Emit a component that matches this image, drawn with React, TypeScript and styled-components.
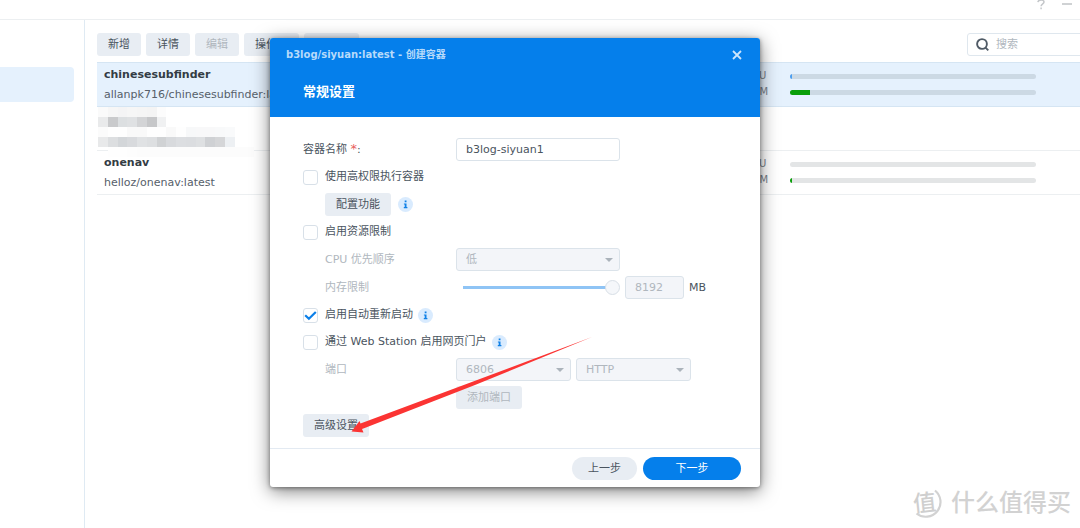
import React from "react";
import styled, { createGlobalStyle, css } from "styled-components";

const GlobalStyle = createGlobalStyle`
  *, *::before, *::after { box-sizing: border-box; }
  html, body, #root { height: 100%; }
  body {
    margin: 0;
    overflow: hidden;
    background: #fff;
    color: #4a545e;
    font: 11px/16px "DejaVu Sans", "Noto Sans CJK SC", sans-serif;
  }
  button, input, select { font: inherit; color: inherit; margin: 0; }
`;

const Desktop = styled.div`
  position: relative;
  display: flex;
  flex-direction: column;
  min-height: 100%;
  overflow: hidden;
`;

const TopBar = styled.header`
  display: flex;
  justify-content: flex-end;
  align-items: flex-start;
  gap: 16px;
  height: 20px;
  padding-right: 8px;
  border-bottom: 1px solid #eceff1;
`;

const WindowButton = styled.button`
  display: flex;
  width: 10px;
  height: 10px;
  padding: 0;
  border: 0;
  background: none;
  color: #c4c7ca;
`;

const Columns = styled.div`
  display: flex;
  flex: 1;
`;

const Sidebar = styled.nav`
  width: 85px;
  padding: 47px 10px 0 0;
  border-right: 1px solid #dfeaf3;
`;

const SidebarItem = styled.a`
  display: block;
  height: 35px;
  border-radius: 0 4px 4px 0;
  background: #e5f1fd;
`;

const Main = styled.main`
  flex: 1;
  min-width: 0;
  padding: 13px 0 0 12px;
`;

const Toolbar = styled.div`
  display: flex;
  gap: 5px;
  margin-bottom: 6px;
`;

const Button = styled.button<{ $wide?: boolean }>`
  height: 23px;
  padding: 0 11px;
  border: 0;
  border-radius: 3px;
  background: #e8edf3;
  line-height: 23px;
  white-space: nowrap;
  ${(p) => p.$wide && css`width: 55px; text-align: left;`}
  &:disabled { color: #b0b7be; }
`;

const Search = styled.label`
  display: flex;
  align-items: center;
  gap: 7px;
  width: 130px;
  height: 23px;
  margin: 0 -17px 0 auto;
  padding-left: 8px;
  border: 1px solid #dfe7ee;
  border-radius: 3px;
`;

const SearchInput = styled.input`
  width: 80px;
  padding: 0;
  border: 0;
  outline: 0;
  background: none;
  &::placeholder { color: #b0b7be; opacity: 1; }
`;

const List = styled.ul`
  margin: 0;
  padding: 0;
  list-style: none;
`;

const Item = styled.li<{ $selected?: boolean }>`
  display: flex;
  justify-content: space-between;
  height: 44px;
  padding: 0 44px 0 7px;
  border-bottom: 1px solid #eceff1;
  ${(p) => p.$selected && css`
    height: 45px;
    border-top: 1px solid #d5e5f3;
    border-bottom-color: #d5e5f3;
    background: #e5f1fd;
  `}
`;

const Names = styled.div`
  display: flex;
  flex-direction: column;
  gap: 4px;
  padding-top: 4px;
`;

const Name = styled.strong`
  color: #333c44;
`;

const Image = styled.span`
  color: #56606a;
`;

const Meters = styled.div`
  display: grid;
  grid-template-columns: 44px 246px;
  grid-auto-rows: 16px;
  align-items: center;
  padding-top: 5px;
  color: #7a838c;
  font-size: 10px;
`;

const Track = styled.div`
  height: 5px;
  overflow: hidden;
  border-radius: 3px;
  background: rgba(60, 70, 80, 0.14);
`;

const Fill = styled.div<{ $color: string }>`
  height: 100%;
  background: ${(p) => p.$color};
`;

const Mosaic = styled.div`
  display: grid;
  grid-template-columns: repeat(16, 1fr);
  grid-auto-rows: 10px;
  width: 156px;
  margin-left: -6px;
`;

const Tile = styled.span<{ $color: string }>`
  background: ${(p) => p.$color};
`;

const Dialog = styled.section`
  position: absolute;
  top: 38px;
  left: 270px;
  width: 490px;
  border-radius: 3px;
  background: #fff;
  box-shadow: 0 4px 18px rgba(0, 0, 0, 0.5), 0 1px 4px rgba(0, 0, 0, 0.4);
`;

const DialogHeader = styled.header`
  height: 79px;
  padding: 9px 16px 0;
  border-radius: 3px 3px 0 0;
  background: #057feb;
  color: #fff;
`;

const TitleRow = styled.div`
  display: flex;
  justify-content: space-between;
  align-items: center;
  font-size: 10px;
  font-weight: 700;
  color: #b7dafa;
`;

const Close = styled.button`
  display: flex;
  width: 14px;
  height: 14px;
  padding: 2px;
  border: 0;
  background: none;
  color: #cde5fc;
`;

const Heading = styled.h2`
  margin: 19px 0 0 17px;
  font-size: 13px;
  line-height: 20px;
`;

const Form = styled.form`
  display: flex;
  flex-direction: column;
  gap: 5px;
  padding: 21px 33px 11px;
`;

const Row = styled.div<{ $check?: boolean }>`
  display: flex;
  align-items: center;
  gap: 5px;
  height: ${(p) => (p.$check ? 22 : 23)}px;
`;

const FieldLabel = styled.label<{ $indent?: boolean; $muted?: boolean }>`
  width: 148px;
  padding-left: ${(p) => (p.$indent ? 22 : 0)}px;
  color: ${(p) => (p.$muted ? "#b0b7be" : "inherit")};
`;

const Required = styled.span`
  color: #e8605c;
  font-size: 13px;
`;

const Indent = styled.div<{ $size: number }>`
  display: flex;
  align-items: center;
  gap: 7px;
  padding-left: ${(p) => p.$size}px;
`;

const CheckLabel = styled.label`
  display: flex;
  align-items: center;
  gap: 7px;
`;

const CheckBox = styled.span`
  display: grid;
  width: 15px;
  height: 15px;
  & > * { grid-area: 1 / 1; }
`;

const CheckInput = styled.input`
  appearance: none;
  border: 1px solid #d8e0e8;
  border-radius: 3px;
  background: #fff;
  & + svg { visibility: hidden; }
  &:checked + svg { visibility: visible; }
`;

const field = css`
  height: 23px;
  padding: 0 9px;
  border: 1px solid #dbe3ea;
  border-radius: 3px;
  background: #fff;
  opacity: 1;
  &:disabled {
    background: #f3f5f9;
    color: #b0b7be;
  }
`;

const TextInput = styled.input<{ $width: number }>`
  ${field}
  width: ${(p) => p.$width}px;
`;

const SelectBox = styled.span<{ $width: number }>`
  display: grid;
  align-items: center;
  width: ${(p) => p.$width}px;
  & > * { grid-area: 1 / 1; }
  & > svg { justify-self: end; margin-right: 7px; pointer-events: none; }
`;

const SelectInput = styled.select`
  ${field}
  width: 100%;
  appearance: none;
`;

const Range = styled.input`
  appearance: none;
  width: 157px;
  height: 15px;
  margin-left: 7px;
  background: linear-gradient(#8fc4f5, #8fc4f5) 0 6px / 145px 3px no-repeat;
  &::-webkit-slider-thumb {
    appearance: none;
    width: 15px;
    height: 15px;
    border: 1px solid #d8dfe6;
    border-radius: 50%;
    background: #f5f7fa;
  }
`;

const InfoButton = styled.button`
  display: flex;
  width: 15px;
  height: 15px;
  padding: 0;
  border: 0;
  border-radius: 50%;
  background: #d9ebfe;
`;

const DialogFooter = styled.footer`
  display: flex;
  justify-content: flex-end;
  gap: 6px;
  height: 39px;
  padding: 8px 19px 0 0;
  border-top: 1px solid #e3eaf2;
`;

const Pill = styled.button<{ $primary?: boolean }>`
  width: ${(p) => (p.$primary ? 98 : 65)}px;
  height: 23px;
  padding: 0;
  border: 0;
  border-radius: 12px;
  background: ${(p) => (p.$primary ? "#057feb" : "#e8edf3")};
  color: ${(p) => (p.$primary ? "#fff" : "inherit")};
`;

const Pointer = styled.svg`
  position: absolute;
  top: 330px;
  left: 345px;
  pointer-events: none;
`;

const Watermark = styled.div`
  position: absolute;
  right: 9px;
  bottom: 8px;
  display: flex;
  align-items: center;
  gap: 8px;
  color: #d2d2d2;
  font-size: 24px;
  line-height: 34px;
`;

const Brand = styled.span`
  font-weight: 500;
`;

type Usage = { label: string; value: number; color: string };

const mosaicTiles = [
  "#fafafa #f6f6f6 #f4f4f5 #f6f6f6 #f5f5f5 #f4f4f4 #fcfcfc #fff #fff #fff #fff #fff #fff #fff #fff #fff",
  "#e9eaeb #c9cacc #dcdfe1 #dfe1e3 #d3d4d6 #c6c7c9 #f0f1f2 #fff #fff #fff #fff #fff #fff #fff #fff #fff",
  "#fbfbfb #fefefe #fefefe #f9f9f9 #f9f9f9 #fefefe #fefefe #f9f9f9 #fefefe #f7f8f9 #f8f8f9 #f8f8f9 #f8f9fa #f9fafb #fff #fff",
  "#e8e9ea #dcdee0 #d3d6d9 #d8dadd #e0e2e4 #dddfe1 #d0d2d4 #d8dadd #dcdee1 #dbdde0 #dee0e2 #cfd1d4 #d5d6d8 #edf0f3 #fff #fff",
  "transparent #fefefe #fefefe #fdfdfd #fcfcfc #fcfcfc #fcfcfc #fcfcfc #fcfcfc #fcfcfc #fcfcfc #fcfcfc #fcfcfc #fcfcfc #fcfcfc #fcfcfc",
].flatMap((line) => line.split(" "));

function Usages({ items }: { items: Usage[] }) {
  return (
    <Meters>
      {items.map((u) => (
        <React.Fragment key={u.label}>
          <span>{u.label}</span>
          <Track>
            <Fill $color={u.color} style={{ width: `${u.value}%` }} />
          </Track>
        </React.Fragment>
      ))}
    </Meters>
  );
}

function Info() {
  return (
    <InfoButton type="button" aria-label="info">
      <svg width="15" height="15" viewBox="0 0 15 15" fill="#0f80e6">
        <path d="M6.7 3.6h1.8v1.7H6.7zM5.9 6.4h2.6v3.7h.9v1.2H5.8v-1.2h.9V7.6h-.8z" />
      </svg>
    </InfoButton>
  );
}

function Check({ id, label, checked }: { id: string; label: string; checked?: boolean }) {
  return (
    <CheckLabel htmlFor={id}>
      <CheckBox>
        <CheckInput id={id} type="checkbox" defaultChecked={checked} />
        <svg width="15" height="15" viewBox="0 0 15 15" fill="none" stroke="#0b7fe8" strokeWidth="2.2">
          <path d="M2.2 7.2l3.7 3.6L12.8 4" />
        </svg>
      </CheckBox>
      {label}
    </CheckLabel>
  );
}

function Select({ id, width, value, label }: { id: string; width: number; value: string; label?: string }) {
  return (
    <SelectBox $width={width}>
      <SelectInput id={id} disabled aria-label={label}>
        <option>{value}</option>
      </SelectInput>
      <svg width="8" height="4" viewBox="0 0 8 4" fill="#abb3bb">
        <path d="M0 0h8L4 4z" />
      </svg>
    </SelectBox>
  );
}

export default function App() {
  return (
    <Desktop>
      <GlobalStyle />
      <TopBar>
        <WindowButton aria-label="帮助">
          <svg width="10" height="10" viewBox="0 0 10 10" fill="none" stroke="currentColor" strokeWidth="1.5">
            <path d="M1.900 2.200C2.200-.7 8 -.7 8 2c0 1.900-2.900 1.700-2.900 4.300M5.100 7.600v1.600" />
          </svg>
        </WindowButton>
        <WindowButton aria-label="最小化">
          <svg width="10" height="10" viewBox="0 0 10 10" fill="none" stroke="currentColor" strokeWidth="1.6">
            <path d="M0 4h10" />
          </svg>
        </WindowButton>
      </TopBar>
      <Columns>
        <Sidebar>
          <SidebarItem href="#" aria-label="容器" />
        </Sidebar>
        <Main>
          <Toolbar>
            <Button>新增</Button>
            <Button>详情</Button>
            <Button disabled>编辑</Button>
            <Button $wide>操作</Button>
            <Button $wide aria-label="设置" />
            <Search>
              <svg width="13" height="13" viewBox="0 0 13 13" fill="none" stroke="#505b66" strokeWidth="1.9">
                <circle cx="6" cy="6" r="4.900" />
                <path d="M9.300 9.300l3 3" />
              </svg>
              <SearchInput placeholder="搜索" aria-label="搜索" />
            </Search>
          </Toolbar>
          <List>
            <Item $selected>
              <Names>
                <Name>chinesesubfinder</Name>
                <Image>allanpk716/chinesesubfinder:latest</Image>
              </Names>
              <Usages
                items={[
                  { label: "CPU", value: 1, color: "#4d9ff0" },
                  { label: "RAM", value: 8, color: "#0a9f0a" },
                ]}
              />
            </Item>
            <Item>
              <Mosaic>
                {mosaicTiles.map((color, i) => (
                  <Tile key={i} $color={color} />
                ))}
              </Mosaic>
            </Item>
            <Item>
              <Names>
                <Name>onenav</Name>
                <Image>helloz/onenav:latest</Image>
              </Names>
              <Usages
                items={[
                  { label: "CPU", value: 0, color: "#4d9ff0" },
                  { label: "RAM", value: 1, color: "#0a9f0a" },
                ]}
              />
            </Item>
          </List>
        </Main>
      </Columns>

      <Dialog role="dialog" aria-labelledby="dialog-title">
        <DialogHeader>
          <TitleRow>
            <span id="dialog-title">b3log/siyuan:latest - 创建容器</span>
            <Close aria-label="关闭">
              <svg width="10" height="10" viewBox="0 0 10 10" fill="none" stroke="currentColor" strokeWidth="1.8">
                <path d="M1 1l8 8M9 1L1 9" />
              </svg>
            </Close>
          </TitleRow>
          <Heading>常规设置</Heading>
        </DialogHeader>
        <Form>
          <Row>
            <FieldLabel htmlFor="name">
              容器名称 <Required>*</Required>:
            </FieldLabel>
            <TextInput id="name" $width={164} defaultValue="b3log-siyuan1" />
          </Row>
          <Row $check>
            <Check id="privileged" label="使用高权限执行容器" />
          </Row>
          <Row>
            <Indent $size={22}>
              <Button type="button">配置功能</Button>
              <Info />
            </Indent>
          </Row>
          <Row $check>
            <Check id="limit" label="启用资源限制" />
          </Row>
          <Row>
            <FieldLabel htmlFor="cpu" $indent $muted>CPU 优先顺序</FieldLabel>
            <Select id="cpu" width={164} value="低" />
          </Row>
          <Row>
            <FieldLabel htmlFor="memory" $indent $muted>内存限制</FieldLabel>
            <Range id="memory" type="range" min={0} max={8192} defaultValue={8192} disabled />
            <TextInput aria-label="内存限制" $width={59} defaultValue="8192" disabled />
            <span>MB</span>
          </Row>
          <Row $check>
            <Check id="restart" label="启用自动重新启动" checked />
            <Info />
          </Row>
          <Row $check>
            <Check id="portal" label="通过 Web Station 启用网页门户" />
            <Info />
          </Row>
          <Row>
            <FieldLabel htmlFor="port" $indent $muted>端口</FieldLabel>
            <Select id="port" width={115} value="6806" />
            <Select id="protocol" width={115} value="HTTP" label="协议" />
          </Row>
          <Row>
            <Indent $size={153}>
              <Button type="button" disabled>添加端口</Button>
            </Indent>
          </Row>
          <Row>
            <Button type="button">高级设置</Button>
          </Row>
        </Form>
        <DialogFooter>
          <Pill>上一步</Pill>
          <Pill $primary>下一步</Pill>
        </DialogFooter>
      </Dialog>

      <Pointer width="252" height="110" viewBox="0 0 252 110" fill="#fb3433" aria-hidden="true">
        <path d="M247 7L15.500 93.500l-1-2.500L6.500 101.500l12 1-1.500-3.500L21 97.500 130 55z" />
      </Pointer>

      <Watermark>
        <svg width="32" height="34" viewBox="0 0 32 34" fill="none">
          <path d="M24 4.500A14.500 14.500 0 0 1 5.500 27.500" stroke="#d2d2d2" strokeWidth="2.200" />
          <text x="2" y="25" fontSize="23" fontWeight="500" fill="#cfcfcf" transform="rotate(-6 14 16)">值</text>
        </svg>
        <Brand>什么值得买</Brand>
      </Watermark>
    </Desktop>
  );
}
